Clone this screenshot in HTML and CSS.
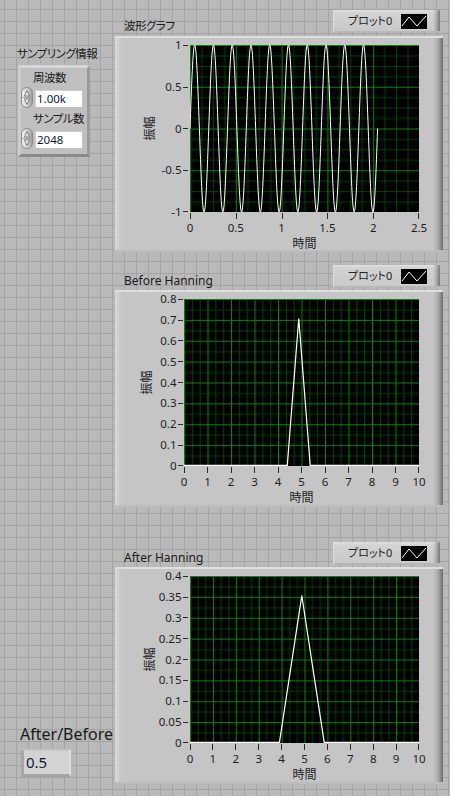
FILE: index.html
```html
<!DOCTYPE html>
<html lang="ja">
<head>
<meta charset="utf-8">
<title>Hanning</title>
<link rel="stylesheet" href="styles.css">
</head>
<body>
<div class="panel">
  <div class="left">
    <div class="sampling">
      <div class="cap jp">サンプリング情報</div>
      <div class="cluster">
        <div class="flabel jp first">周波数</div>
        <div class="numrow">
          <span class="spin"><svg width="10" height="19" viewBox="0 0 10 19"><path d="M5 2.5 L2.3 8 H7.7 Z M5 16.5 L2.3 11 H7.7 Z" fill="#e6e6e6" stroke="#6c6c6c" stroke-width="0.8"/><path d="M0 9.5 H10" stroke="#9a9a9a" stroke-width="0.8"/></svg></span>
          <span class="field">1.00k</span>
        </div>
        <div class="flabel jp second">サンプル数</div>
        <div class="numrow">
          <span class="spin"><svg width="10" height="19" viewBox="0 0 10 19"><path d="M5 2.5 L2.3 8 H7.7 Z M5 16.5 L2.3 11 H7.7 Z" fill="#e6e6e6" stroke="#6c6c6c" stroke-width="0.8"/><path d="M0 9.5 H10" stroke="#9a9a9a" stroke-width="0.8"/></svg></span>
          <span class="field">2048</span>
        </div>
      </div>
    </div>
    <div class="ratio">
      <div class="rcap">After/Before</div>
      <div class="ind">0.5</div>
    </div>
  </div>

  <div class="right">
    <section class="graph g1">
      <div class="ghead">
        <span class="gtitle jp">波形グラフ</span>
        <div class="legend"><span class="ltext">プロット0</span><span class="picon"><svg width="26" height="15" viewBox="0 0 26 15"><path d="M1 12 L8 3 L16 12 L25 2" fill="none" stroke="#fff" stroke-width="1"/></svg></span></div>
      </div>
      <div class="frame">
        <svg class="chart" width="328" height="216" viewBox="0 0 328 216">
          <defs>
            <pattern id="grid1" x="75" y="9" width="45.8" height="41.75" patternUnits="userSpaceOnUse">
              <rect width="45.8" height="41.75" fill="#000"/>
              <path d="M11.95 0V41.75M23.4 0V41.75M34.85 0V41.75M0 10.94H45.8M0 21.375H45.8M0 31.81H45.8" stroke="#004200" stroke-width="1"/>
              <path d="M0.5 0V41.75M0 0.5H45.8" stroke="#008800" stroke-width="1"/>
            </pattern>
            <clipPath id="clip1"><rect x="75" y="8.5" width="229" height="168"/></clipPath>
          </defs>
          <rect x="75" y="9" width="229" height="167" fill="url(#grid1)"/>
          <path clip-path="url(#clip1)" fill="none" stroke="#fff" stroke-width="1" d="M75 92.5 c1.53,-42.78 2.99,-83.5 4.69,-83.5 c1.7,0 3.16,40.72 4.69,83.5 c1.53,42.78 2.99,83.5 4.69,83.5 c1.7,0 3.16,-40.72 4.69,-83.5 c1.53,-42.78 2.99,-83.5 4.69,-83.5 c1.7,0 3.16,40.72 4.69,83.5 c1.53,42.78 2.99,83.5 4.69,83.5 c1.7,0 3.16,-40.72 4.69,-83.5 c1.53,-42.78 2.99,-83.5 4.69,-83.5 c1.7,0 3.16,40.72 4.69,83.5 c1.53,42.78 2.99,83.5 4.69,83.5 c1.7,0 3.16,-40.72 4.69,-83.5 c1.53,-42.78 2.99,-83.5 4.69,-83.5 c1.7,0 3.16,40.72 4.69,83.5 c1.53,42.78 2.99,83.5 4.69,83.5 c1.7,0 3.16,-40.72 4.69,-83.5 c1.53,-42.78 2.99,-83.5 4.69,-83.5 c1.7,0 3.16,40.72 4.69,83.5 c1.53,42.78 2.99,83.5 4.69,83.5 c1.7,0 3.16,-40.72 4.69,-83.5 c1.53,-42.78 2.99,-83.5 4.69,-83.5 c1.7,0 3.16,40.72 4.69,83.5 c1.53,42.78 2.99,83.5 4.69,83.5 c1.7,0 3.16,-40.72 4.69,-83.5 c1.53,-42.78 2.99,-83.5 4.69,-83.5 c1.7,0 3.16,40.72 4.69,83.5 c1.53,42.78 2.99,83.5 4.69,83.5 c1.7,0 3.16,-40.72 4.69,-83.5 c1.53,-42.78 2.99,-83.5 4.69,-83.5 c1.7,0 3.16,40.72 4.69,83.5 c1.53,42.78 2.99,83.5 4.69,83.5 c1.7,0 3.16,-40.72 4.69,-83.5 c1.53,-42.78 2.99,-83.5 4.69,-83.5 c1.7,0 3.16,40.72 4.69,83.5 c1.53,42.78 2.99,83.5 4.69,83.5 c1.7,0 3.16,-40.72 4.69,-83.5 c1.53,-42.78 2.99,-83.5 4.69,-83.5 c1.7,0 3.16,40.72 4.69,83.5 c1.53,42.78 2.99,83.5 4.69,83.5 c1.7,0 3.16,-40.72 4.69,-83.5"/>
          <path class="ticks" d="M68 9.5H73M68 51.5H73M68 92.5H73M68 134.5H73M68 175.5H73M75.5 177V183M121.5 177V183M167.5 177V183M212.5 177V183M258.5 177V183M303.5 177V183"/>
          <g class="ylab">
            <text x="66.5" y="13">1</text>
            <text x="66.5" y="54.8">0.5</text>
            <text x="66.5" y="96.5">0</text>
            <text x="66.5" y="138.3">-0.5</text>
            <text x="66.5" y="180">-1</text>
          </g>
          <g class="xlab">
            <text x="75" y="196">0</text>
            <text x="120.8" y="196">0.5</text>
            <text x="166.6" y="196">1</text>
            <text x="212.4" y="196">1.5</text>
            <text x="258.2" y="196">2</text>
            <text x="304" y="196">2.5</text>
          </g>
          <text class="axt" x="189.5" y="211.5">時間</text>
          <text class="axt" transform="translate(34 92.5) rotate(-90)" y="4.5">振幅</text>
        </svg>
      </div>
    </section>

    <section class="graph g2">
      <div class="ghead">
        <span class="gtitle">Before Hanning</span>
        <div class="legend"><span class="ltext">プロット0</span><span class="picon"><svg width="26" height="15" viewBox="0 0 26 15"><path d="M1 12 L8 3 L16 12 L25 2" fill="none" stroke="#fff" stroke-width="1"/></svg></span></div>
      </div>
      <div class="frame">
        <svg class="chart" width="328" height="217" viewBox="0 0 328 217">
          <defs>
            <pattern id="grid2" x="69" y="9" width="23.5" height="20.875" patternUnits="userSpaceOnUse">
              <rect width="23.5" height="20.875" fill="#000"/>
              <path d="M8.33 0V20.875M16.17 0V20.875M0 10.94H23.5" stroke="#004200" stroke-width="1"/>
              <path d="M0.5 0V20.875M0 0.5H23.5" stroke="#008800" stroke-width="1"/>
            </pattern>
          </defs>
          <rect x="69" y="9" width="235" height="167" fill="url(#grid2)"/>
          <path fill="none" stroke="#fff" stroke-width="1.2" d="M69 175.4 H172.3 L183.75 28.6 L195.2 175.4 H304"/>
          <path class="ticks" d="M63 9.5H68M63 30.5H68M63 50.5H68M63 71.5H68M63 92.5H68M63 113.5H68M63 134.5H68M63 155.5H68M63 175.5H68M69.5 177V183M92.5 177V183M116.5 177V183M139.5 177V183M163.5 177V183M186.5 177V183M210.5 177V183M233.5 177V183M257.5 177V183M280.5 177V183M303.5 177V183"/>
          <g class="ylab">
            <text x="61.5" y="13">0.8</text>
            <text x="61.5" y="33.9">0.7</text>
            <text x="61.5" y="54.8">0.6</text>
            <text x="61.5" y="75.6">0.5</text>
            <text x="61.5" y="96.5">0.4</text>
            <text x="61.5" y="117.4">0.3</text>
            <text x="61.5" y="138.3">0.2</text>
            <text x="61.5" y="159.1">0.1</text>
            <text x="61.5" y="180">0</text>
          </g>
          <g class="xlab">
            <text x="69" y="196">0</text>
            <text x="92.5" y="196">1</text>
            <text x="116" y="196">2</text>
            <text x="139.5" y="196">3</text>
            <text x="163" y="196">4</text>
            <text x="186.5" y="196">5</text>
            <text x="210" y="196">6</text>
            <text x="233.5" y="196">7</text>
            <text x="257" y="196">8</text>
            <text x="280.5" y="196">9</text>
            <text x="304" y="196">10</text>
          </g>
          <text class="axt" x="186.5" y="211.5">時間</text>
          <text class="axt" transform="translate(31 92.5) rotate(-90)" y="4.5">振幅</text>
        </svg>
      </div>
    </section>

    <section class="graph g3">
      <div class="ghead">
        <span class="gtitle">After Hanning</span>
        <div class="legend"><span class="ltext">プロット0</span><span class="picon"><svg width="26" height="15" viewBox="0 0 26 15"><path d="M1 12 L8 3 L16 12 L25 2" fill="none" stroke="#fff" stroke-width="1"/></svg></span></div>
      </div>
      <div class="frame">
        <svg class="chart" width="328" height="217" viewBox="0 0 328 217">
          <defs>
            <pattern id="grid3" x="75" y="9" width="22.9" height="20.875" patternUnits="userSpaceOnUse">
              <rect width="22.9" height="20.875" fill="#000"/>
              <path d="M8.13 0V20.875M15.77 0V20.875M0 10.94H22.9" stroke="#004200" stroke-width="1"/>
              <path d="M0.5 0V20.875M0 0.5H22.9" stroke="#008800" stroke-width="1"/>
            </pattern>
          </defs>
          <rect x="75" y="9" width="229" height="167" fill="url(#grid3)"/>
          <path fill="none" stroke="#fff" stroke-width="1.2" d="M75 175.4 H164.45 L175.6 102.2 L186.8 28.6 L198 102.2 L209.2 175.4 H304"/>
          <path class="ticks" d="M68 9.5H73M68 30.5H73M68 50.5H73M68 71.5H73M68 92.5H73M68 113.5H73M68 134.5H73M68 155.5H73M68 175.5H73M75.5 177V183M97.5 177V183M120.5 177V183M143.5 177V183M166.5 177V183M189.5 177V183M212.5 177V183M235.5 177V183M258.5 177V183M281.5 177V183M303.5 177V183"/>
          <g class="ylab">
            <text x="66.5" y="13">0.4</text>
            <text x="66.5" y="33.9">0.35</text>
            <text x="66.5" y="54.8">0.3</text>
            <text x="66.5" y="75.6">0.25</text>
            <text x="66.5" y="96.5">0.2</text>
            <text x="66.5" y="117.4">0.15</text>
            <text x="66.5" y="138.3">0.1</text>
            <text x="66.5" y="159.1">0.05</text>
            <text x="66.5" y="180">0</text>
          </g>
          <g class="xlab">
            <text x="75" y="196">0</text>
            <text x="97.9" y="196">1</text>
            <text x="120.8" y="196">2</text>
            <text x="143.7" y="196">3</text>
            <text x="166.6" y="196">4</text>
            <text x="189.5" y="196">5</text>
            <text x="212.4" y="196">6</text>
            <text x="235.3" y="196">7</text>
            <text x="258.2" y="196">8</text>
            <text x="281.1" y="196">9</text>
            <text x="304" y="196">10</text>
          </g>
          <text class="axt" x="189.5" y="211.5">時間</text>
          <text class="axt" transform="translate(34 92.5) rotate(-90)" y="4.5">振幅</text>
        </svg>
      </div>
    </section>
  </div>
</div>
</body>
</html>
```

FILE: styles.css
```css
* { box-sizing: border-box; }

html, body {
  margin: 0;
  padding: 0;
}

body {
  width: 450px;
  height: 796px;
  overflow: hidden;
  font-family: "Noto Sans", "Noto Sans CJK JP", sans-serif;
  font-feature-settings: "palt";
  color: #1a1a1a;
  background-color: #b9b9b9;
  background-image:
    linear-gradient(#a4a4a4 1px, transparent 1px),
    linear-gradient(90deg, #a4a4a4 1px, transparent 1px);
  background-size: 12px 12px;
  background-position: 4px 9px;
}

.jp { letter-spacing: -0.5px; }

.panel {
  display: flex;
  height: 796px;
}

/* ---------- left column ---------- */
.left {
  width: 115px;
  display: flex;
  flex-direction: column;
  justify-content: space-between;
  padding: 46px 0 19px 17px;
}

.cap {
  font-size: 11.5px;
  line-height: 16px;
  white-space: nowrap;
}

.cluster {
  margin: 3px 0 0 1px;
  width: 72px;
  height: 92px;
  border: 3px solid;
  border-color: #d6d6d6 #9a9a9a #8a8a8a #cdcdcd;
  background: #bfbfbf;
}

.flabel {
  font-size: 11.5px;
  line-height: 16px;
  padding-left: 12px;
  white-space: nowrap;
}
.flabel.first { margin-top: 2px; }
.flabel.second { margin-top: 3px; }

.numrow {
  display: flex;
  align-items: flex-start;
  gap: 2px;
  height: 21px;
  margin-top: 1px;
}

.spin {
  width: 12px;
  height: 21px;
  border: 1px solid #8c8c8c;
  border-radius: 6px;
  background: linear-gradient(to right, #f2f2f2 0%, #d0d0d0 55%, #9e9e9e 100%);
  display: flex;
}

.field {
  margin-top: 3px;
  width: 47px;
  height: 17px;
  background: #ffffff;
  box-shadow: inset 1px 1px 0 #d0d0d0;
  font-size: 11.5px;
  line-height: 17px;
  padding-left: 2px;
  color: #0e1c3a;
}

.rcap {
  font-size: 16px;
  line-height: 20px;
  margin-left: 3px;
  white-space: nowrap;
}

.ind {
  margin: 5px 0 0 4px;
  width: 50px;
  height: 28px;
  border-style: solid;
  border-width: 2px 2px 3px 3px;
  border-color: #c4c4c4 #dedede #a4a4a4 #a6a6a6;
  background: #d3d3d3;
  font-size: 15px;
  line-height: 22px;
  padding-left: 2px;
  color: #0e1c3a;
}

/* ---------- graphs ---------- */
.right {
  width: 328px;
  display: flex;
  flex-direction: column;
}

.graph { display: flex; flex-direction: column; }
.g1 { margin-top: 10px; }
.g2 { margin-top: 13px; }
.g3 { margin-top: 35px; }

.ghead {
  display: flex;
  justify-content: space-between;
  align-items: flex-start;
  height: 25px;
}
.g1 .ghead { height: 26px; }

.gtitle {
  margin: 8px 0 0 9px;
  font-size: 12px;
  line-height: 16px;
  white-space: nowrap;
}
.gtitle.jp { font-size: 11.5px; }

.legend {
  width: 107px;
  height: 22px;
  margin-right: 3px;
  display: flex;
  align-items: center;
  padding: 0 12px 0 15px;
  background:
    linear-gradient(to right, rgba(0,0,0,0) calc(100% - 7px), rgba(0,0,0,0.14) calc(100% - 4px), rgba(0,0,0,0.42) 100%),
    linear-gradient(to bottom, #e2e2e2 0, #d2d2d2 3px, #c9c9c9 100%);
  box-shadow: inset 1px 0 0 #dedede, inset 0 -1px 0 #b8b8b8;
}

.ltext {
  font-size: 11px;
  line-height: 14px;
  white-space: nowrap;
  color: #222;
}

.picon {
  margin-left: auto;
  width: 28px;
  height: 17px;
  background: #000;
  border: 1px solid #d0d0d0;
  display: flex;
}

.frame {
  height: 217px;
  background:
    linear-gradient(to right, rgba(255,255,255,0.35) 0, rgba(255,255,255,0) 7px, rgba(0,0,0,0) calc(100% - 10px), rgba(0,0,0,0.13) calc(100% - 5px), rgba(0,0,0,0.45) 100%),
    #c5c5c5;
  box-shadow: inset 0 2px 0 #dedede, inset 0 -2px 0 #bdbdbd;
}
.g1 .frame { height: 216px; }

.chart { display: block; }

.chart .ticks {
  stroke: #2a2a2a;
  stroke-width: 1;
  fill: none;
  shape-rendering: crispEdges;
}

.chart text {
  font-family: "Noto Sans", "Noto Sans CJK JP", sans-serif;
  font-size: 11.5px;
  fill: #1e1e1e;
}
.chart .ylab text { text-anchor: end; }
.chart .xlab text { text-anchor: middle; }
.chart .axt {
  font-size: 12px;
  text-anchor: middle;
}
```
